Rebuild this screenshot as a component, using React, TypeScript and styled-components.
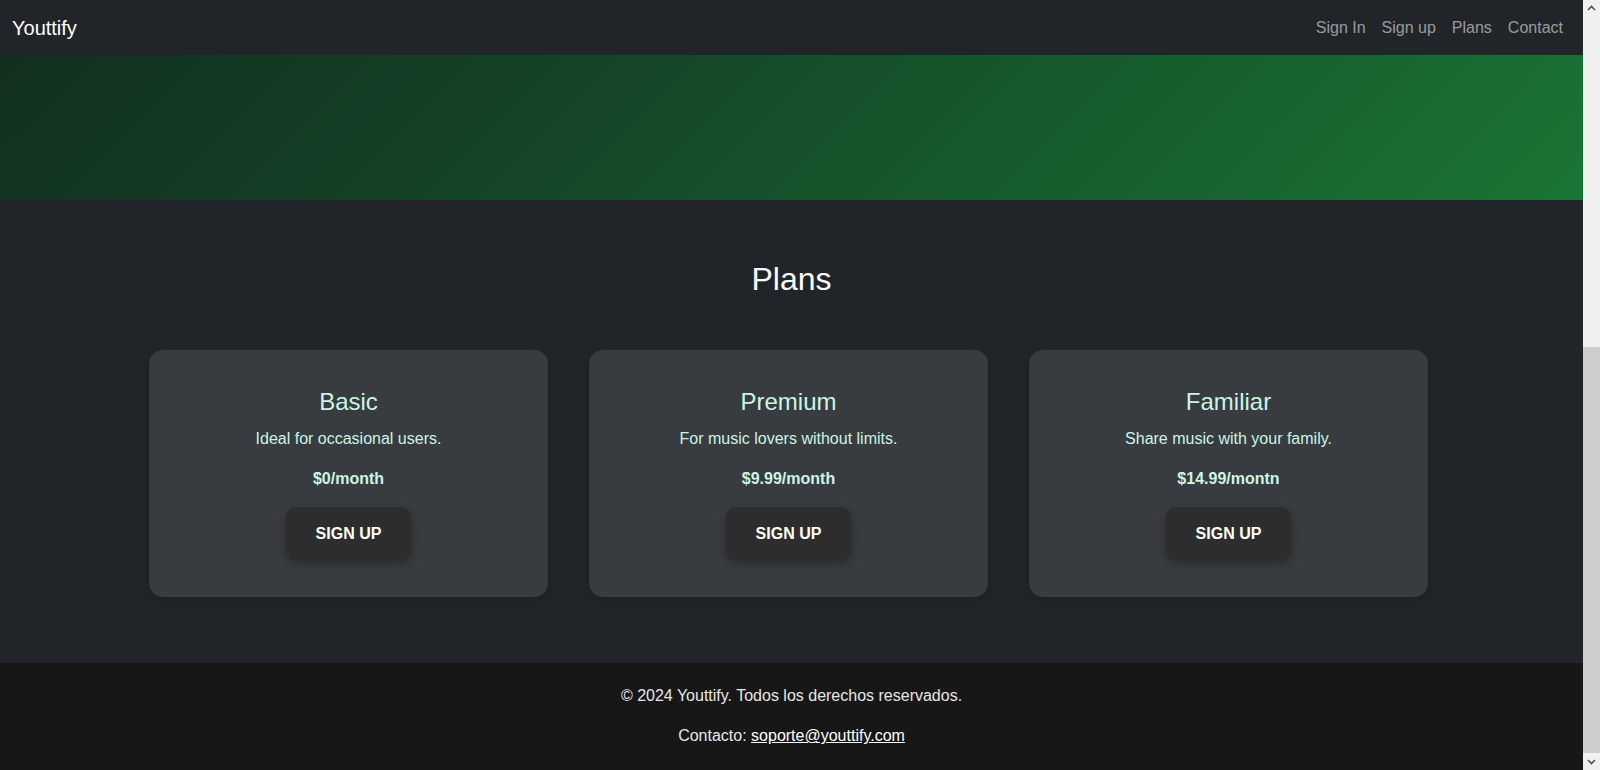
import React, { useCallback, useLayoutEffect, useRef, useState } from "react";
import styled, { createGlobalStyle } from "styled-components";

const GlobalStyle = createGlobalStyle`
  *, *::before, *::after { box-sizing: border-box; }
  html, body { margin: 0; padding: 0; height: 100%; overflow: hidden; }
  body {
    background: #212529;
    color: #ffffff;
    font-family: "Liberation Sans", Arial, Helvetica, sans-serif;
  }
`;

const Shell = styled.div`
  display: flex;
  height: 100vh;
  background: #212529;
`;

const Page = styled.div`
  flex: 1;
  min-width: 0;
  height: 100%;
  overflow-y: scroll;
  scrollbar-width: none;
  background: #212529;
  &::-webkit-scrollbar {
    display: none;
  }
`;

const ScrollBar = styled.div`
  width: 17px;
  flex: 0 0 17px;
  display: flex;
  flex-direction: column;
  background: #f0f0f0;
`;

const ScrollArrow = styled.div`
  height: 17px;
  flex: 0 0 17px;
  display: flex;
  align-items: center;
  justify-content: center;
  color: #505050;
`;

const ScrollTrack = styled.div`
  position: relative;
  flex: 1;
`;

const ScrollThumb = styled.div`
  position: absolute;
  left: 0;
  right: 0;
  background: #cdcdcd;
`;

const NavBar = styled.nav`
  position: sticky;
  top: 0;
  z-index: 10;
  height: 55px;
  display: flex;
  align-items: center;
  justify-content: space-between;
  padding: 0 12px;
  background: #212529;
`;

const Brand = styled.a`
  font-size: 20px;
  line-height: 30px;
  color: #ffffff;
  text-decoration: none;
`;

const NavList = styled.ul`
  display: flex;
  list-style: none;
  margin: 0;
  padding: 0;
`;

const NavLink = styled.a`
  display: block;
  padding: 0 8px;
  font-size: 16px;
  line-height: 24px;
  color: rgba(255, 255, 255, 0.55);
  text-decoration: none;
`;

const Hero = styled.section`
  height: 770px;
  background: linear-gradient(
    135deg,
    #0e1a14 0%,
    #13301f 27%,
    #144226 50%,
    #1a7535 100%
  );
`;

const PlansSection = styled.section`
  padding: 60px 0 66px;
  display: flex;
  flex-direction: column;
  align-items: center;
`;

const SectionTitle = styled.h2`
  margin: 0 0 52px;
  font-size: 32px;
  line-height: 38.4px;
  font-weight: 400;
  color: #ffffff;
`;

const CardRow = styled.div`
  display: flex;
  justify-content: center;
  gap: 41px;
  width: 100%;
  padding-right: 6px;
`;

const Card = styled.div`
  width: 399px;
  height: 247px;
  padding: 38px 20px 0;
  display: flex;
  flex-direction: column;
  align-items: center;
  text-align: center;
  background: #383b40;
  border-radius: 14px;
  box-shadow: 0 2px 6px rgba(0, 0, 0, 0.15);
`;

const PlanName = styled.h3`
  margin: 0 0 10px;
  font-size: 24px;
  line-height: 28.8px;
  font-weight: 400;
  color: #cbf5e2;
`;

const PlanText = styled.p<{ $bold?: boolean }>`
  margin: 0 0 16px;
  font-size: 16px;
  line-height: 24px;
  font-weight: ${(p) => (p.$bold ? 700 : 400)};
  color: #cbf5e2;
`;

const SignUpButton = styled.button`
  height: 53px;
  padding: 0 29.5px;
  border: none;
  border-radius: 10px;
  background: #2e2d2d;
  color: #ffffff;
  font-family: inherit;
  font-size: 16px;
  font-weight: 700;
  line-height: 24px;
  text-transform: uppercase;
  box-shadow: 0 4px 10px rgba(0, 0, 0, 0.25);
  cursor: pointer;
`;

const Footer = styled.footer`
  padding: 21px 0 22px;
  background: #171717;
  text-align: center;
`;

const FooterLine = styled.p`
  margin: 0;
  font-size: 16px;
  line-height: 24px;
  color: #e6e6e6;
  & + & {
    margin-top: 16px;
  }
`;

const FooterLink = styled.a`
  color: #ffffff;
  text-decoration: underline;
`;

const plans = [
  { name: "Basic", text: "Ideal for occasional users.", price: "$0/month" },
  { name: "Premium", text: "For music lovers without limits.", price: "$9.99/month" },
  { name: "Familiar", text: "Share music with your family.", price: "$14.99/montn" },
];

function Chevron({ down }: { down?: boolean }) {
  return (
    <svg width="9" height="9" viewBox="0 0 9 9" aria-hidden="true">
      <path
        d={down ? "M1 3 L4.5 6.5 L8 3" : "M1 6 L4.5 2.5 L8 6"}
        fill="none"
        stroke="currentColor"
        strokeWidth="1.6"
      />
    </svg>
  );
}

export default function App() {
  const pageRef = useRef<HTMLDivElement>(null);
  const trackRef = useRef<HTMLDivElement>(null);
  const [thumb, setThumb] = useState({ top: 0, height: 0 });

  const updateThumb = useCallback(() => {
    const el = pageRef.current;
    const track = trackRef.current;
    if (!el || !track) return;
    const len = track.clientHeight;
    const total = el.scrollHeight || 1;
    setThumb({
      top: (len * el.scrollTop) / total,
      height: (len * el.clientHeight) / total,
    });
  }, []);

  useLayoutEffect(() => {
    const el = pageRef.current;
    if (el) el.scrollTop = el.scrollHeight;
    updateThumb();
  }, [updateThumb]);

  return (
    <Shell>
      <GlobalStyle />
      <Page ref={pageRef} onScroll={updateThumb}>
        <NavBar>
          <Brand href="#">Youttify</Brand>
          <NavList>
            <li><NavLink href="#">Sign In</NavLink></li>
            <li><NavLink href="#">Sign up</NavLink></li>
            <li><NavLink href="#">Plans</NavLink></li>
            <li><NavLink href="#">Contact</NavLink></li>
          </NavList>
        </NavBar>
        <Hero />
        <PlansSection>
          <SectionTitle>Plans</SectionTitle>
          <CardRow>
            {plans.map((p) => (
              <Card key={p.name}>
                <PlanName>{p.name}</PlanName>
                <PlanText>{p.text}</PlanText>
                <PlanText $bold>{p.price}</PlanText>
                <SignUpButton>Sign up</SignUpButton>
              </Card>
            ))}
          </CardRow>
        </PlansSection>
        <Footer>
          <FooterLine>© 2024 Youttify. Todos los derechos reservados.</FooterLine>
          <FooterLine>
            Contacto: <FooterLink href="#">soporte@youttify.com</FooterLink>
          </FooterLine>
        </Footer>
      </Page>
      <ScrollBar>
        <ScrollArrow>
          <Chevron />
        </ScrollArrow>
        <ScrollTrack ref={trackRef}>
          <ScrollThumb style={{ top: thumb.top, height: thumb.height }} />
        </ScrollTrack>
        <ScrollArrow>
          <Chevron down />
        </ScrollArrow>
      </ScrollBar>
    </Shell>
  );
}
